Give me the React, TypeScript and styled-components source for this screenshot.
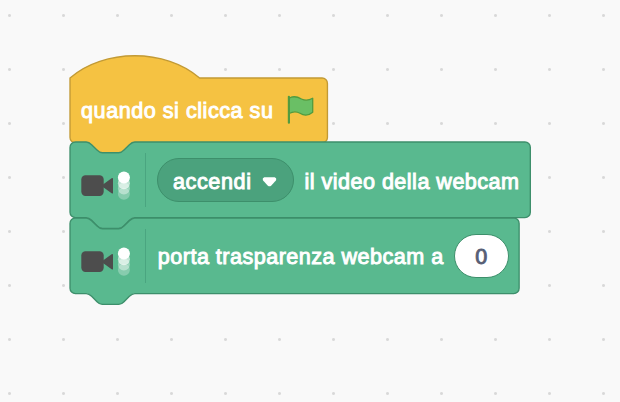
import React from "react";
import styled, { createGlobalStyle } from "styled-components";

const GlobalStyle = createGlobalStyle`
  body {
    margin: 0;
    background: #f9f9f9;
    font-family: "Liberation Sans", Arial, sans-serif;
  }
`;

const SCALE = 1.35;

const Workspace = styled.main`
  box-sizing: border-box;
  width: 620px;
  height: 402px;
  overflow: hidden;
  padding: 77.6px 0 0 70.1px;
  background-color: #f9f9f9;
  background-image: radial-gradient(circle at 9.5px 15.5px, #d8d8d8 0.9px, rgba(216, 216, 216, 0) 2px);
  background-size: 54px 54px;
`;

const Stack = styled.div`
  display: flex;
  flex-direction: column;
  align-items: flex-start;
`;

const BlockBox = styled.div<{ $width: number; $height: number }>`
  position: relative;
  box-sizing: border-box;
  display: flex;
  align-items: center;
  width: ${(p) => p.$width * SCALE}px;
  height: ${(p) => p.$height * SCALE}px;
  padding-left: 11px;
`;

const Outline = styled.svg`
  position: absolute;
  left: 0;
  top: 0;
  overflow: visible;
`;

const Label = styled.span<{ $spacing?: number; $left?: number }>`
  position: relative;
  margin-left: ${(p) => p.$left ?? 0}px;
  padding-top: 3px;
  color: #fff;
  font-size: 21.6px;
  font-weight: 400;
  -webkit-text-stroke: 0.95px #fff;
  line-height: 26px;
  letter-spacing: ${(p) => p.$spacing ?? 0.47}px;
  white-space: nowrap;
`;

const FlagIcon = styled.svg`
  position: absolute;
  left: 216px;
  top: 16.5px;
`;

const CameraIcon = styled.svg`
  position: relative;
  flex: none;
`;

const Separator = styled.span`
  position: relative;
  flex: none;
  width: 1.35px;
  height: 54px;
  margin-left: 10px;
  background: #4aa580;
`;

const Dropdown = styled.span`
  position: relative;
  box-sizing: border-box;
  display: flex;
  flex: none;
  align-items: center;
  width: 137px;
  height: 44.5px;
  margin-left: 11px;
  padding-left: 14.5px;
  border: 1.35px solid #3d8f6b;
  border-radius: 23px;
  background: #4ba27d;
`;

const Arrow = styled.svg`
  position: absolute;
  left: 103.5px;
  top: 17.5px;
`;

const NumberField = styled.span`
  position: absolute;
  box-sizing: border-box;
  left: 383.6px;
  top: 15.6px;
  display: flex;
  align-items: center;
  justify-content: center;
  width: 55px;
  height: 44.5px;
  padding-top: 2px;
  border: 1.35px solid #3d8f6b;
  border-radius: 23px;
  background: #fff;
  color: #575e75;
  font-size: 21.6px;
  -webkit-text-stroke: 0.9px #575e75;
`;

const NOTCH = "c2,0 3,1 4,2 l4,4 c1,1 2,2 4,2 h12 c2,0 3,-1 4,-2 l4,-4 c1,-1 2,-2 4,-2";
const NOTCH_BACK = "c-2,0 -3,1 -4,2 l-4,4 c-1,1 -2,2 -4,2 h-12 c-2,0 -3,-1 -4,-2 l-4,-4 c-1,-1 -2,-2 -4,-2";

type BlockProps = {
  width: number;
  height: number;
  hat?: boolean;
  fill: string;
  stroke: string;
  children: React.ReactNode;
};

function Block({ width, height, hat, fill, stroke, children }: BlockProps) {
  const top = hat ? "M0,0 c25,-22 71,-22 96,0" : `M0,4 a4,4 0 0,1 4,-4 H12 ${NOTCH}`;
  const d = `${top} H${width - 4} a4,4 0 0,1 4,4 V${height - 4} a4,4 0 0,1 -4,4 H48 ${NOTCH_BACK} H4 a4,4 0 0,1 -4,-4 z`;
  return (
    <BlockBox $width={width} $height={height}>
      <Outline width={width * SCALE} height={height * SCALE} viewBox={`0 0 ${width} ${height}`}>
        <path d={d} fill={fill} stroke={stroke} strokeWidth="1" />
      </Outline>
      {children}
    </BlockBox>
  );
}

function Camera() {
  return (
    <CameraIcon width="54" height="54" viewBox="0 0 54 54">
      <rect x="0.3" y="22.2" width="22.4" height="20.7" rx="4.2" fill="#4d4d4d" />
      <path d="M22 31.6 L30.6 25.3 Q32 24.4 32 25.9 V39.7 Q32 41.2 30.6 40.2 L22 34.1z" fill="#4d4d4d" />
      <g fill="#fff">
        <circle cx="42.9" cy="40.8" r="6" opacity=".28" />
        <circle cx="42.9" cy="35.6" r="6" opacity=".4" />
        <circle cx="42.9" cy="30.2" r="6" opacity=".62" />
        <circle cx="42.9" cy="24.5" r="6" />
      </g>
    </CameraIcon>
  );
}

const EVENT = { fill: "#f5c242", stroke: "#c29a35" };
const VIDEO = { fill: "#59b98f", stroke: "#3d8f6b" };

export default function App() {
  return (
    <>
      <GlobalStyle />
      <Workspace>
        <Stack>
          <Block width={190.7} height={48} hat {...EVENT}>
            <Label $spacing={0.52}>quando si clicca su</Label>
            <FlagIcon width="30" height="32" viewBox="0 0 30 32">
              <path
                d="M3 4.2 C8 1.2 12 3 15.5 5 C19 6.8 23 6.4 26.7 4.3 V18.2 C21.5 22.6 17.5 21.5 14 19.3 C10 17 7 17.4 3 19.5z"
                fill="#6abf65"
                stroke="#529b3f"
                strokeWidth="1.3"
                strokeLinejoin="round"
              />
              <path d="M2.9 2.8 V28.7" stroke="#529b3f" strokeWidth="2.2" strokeLinecap="round" />
            </FlagIcon>
          </Block>
          <Block width={341} height={56} {...VIDEO}>
            <Camera />
            <Separator />
            <Dropdown>
              <Label $spacing={0.6}>accendi</Label>
              <Arrow width="16" height="12" viewBox="0 0 16 12">
                <path d="M2.3 1.2 H12.7 Q14.8 1.6 14.2 4 Q13.8 4.8 9.1 9.7 Q7.5 11 5.9 9.7 Q1.2 4.8 .8 4 Q.2 1.6 2.3 1.2z" fill="#fff" />
              </Arrow>
            </Dropdown>
            <Label $left={10}>il video della webcam</Label>
          </Block>
          <Block width={332.7} height={56} {...VIDEO}>
            <Camera />
            <Separator />
            <Label $left={11.4}>porta trasparenza webcam a</Label>
            <NumberField>0</NumberField>
          </Block>
        </Stack>
      </Workspace>
    </>
  );
}
